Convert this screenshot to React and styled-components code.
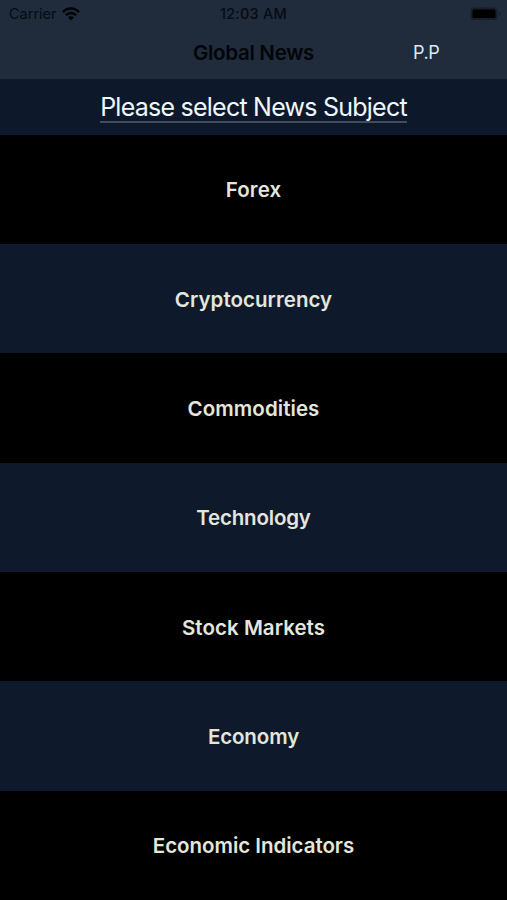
import React from 'react'

import styled, { createGlobalStyle } from 'styled-components'

const subjects = [
    { name: 'Forex', spacing: 0.1 },
    { name: 'Cryptocurrency', spacing: 0.05 },
    { name: 'Commodities', spacing: 0.06 },
    { name: 'Technology', spacing: -0.2 },
    { name: 'Stock Markets', spacing: 0.05 },
    { name: 'Economy', spacing: -0.12 },
    { name: 'Economic Indicators', spacing: -0.03 },
]

export default function App() {
    return (
        <Screen>
            <GlobalStyle />
            <Header>
                <StatusBar>
                    <Carrier>
                        Carrier
                        <WifiIcon />
                    </Carrier>
                    <Clock>12:03 AM</Clock>
                    <BatteryIcon />
                </StatusBar>
                <NavBar>
                    <NavTitle>Global News</NavTitle>
                    <NavButton>P.P</NavButton>
                </NavBar>
            </Header>
            <Prompt>
                <PromptText>Please select News Subject</PromptText>
            </Prompt>
            <List>
                {subjects.map((s, idx) => (
                    <Row key={s.name} $dark={idx % 2 === 0}>
                        <Label $spacing={s.spacing}>{s.name}</Label>
                    </Row>
                ))}
            </List>
        </Screen>
    )
}

const WifiIcon = () => (
    <svg width="18" height="14" viewBox="0 0 18 14" fill="none" stroke="#000204" strokeWidth="2.5">
        <path d="M1 5.1 C5.4 .4 12.6 .4 17 5.1" />
        <path d="M3.9 8.2 C6.8 5.3 11.2 5.3 14.1 8.2" />
        <path d="M9 13.4 L6 10.4 C7.6 8.9 10.4 8.9 12 10.4 Z" fill="#000204" stroke="none" />
    </svg>
)

const BatteryIcon = () => (
    <Battery width="32" height="14" viewBox="0 0 32 14">
        <rect x=".5" y=".5" width="27" height="12.5" rx="3.5" fill="#151e2b" />
        <rect x="2.5" y="2.5" width="23" height="8.5" rx="1.6" fill="#000" />
        <path d="M29 4.5 C31 5.3 31 8.2 29 9 Z" fill="#151e2b" />
    </Battery>
)

const GlobalStyle = createGlobalStyle`

    body {
        margin: 0;
        background: #000;
    }

`

const Screen = styled.div`

    display: flex;
    flex-direction: column;

    height: 900px;
    overflow: hidden;

    background: #000;

    font-family: "Inter", "Liberation Sans", sans-serif;

`

const Header = styled.header`

    flex: none;
    box-sizing: border-box;
    height: 79px;

    background: #202b3b;

`

const StatusBar = styled.div`

    display: grid;
    grid-template-columns: 1fr auto 1fr;
    align-items: center;

    height: 27px;
    padding: 0 5px 0 9px;

    color: #050b14;

`

const Carrier = styled.div`

    display: flex;
    align-items: center;
    gap: 5px;

    font-size: 14.5px;
    letter-spacing: 0;

`

const Clock = styled.div`

    margin-right: 4px;

    font-size: 14.5px;
    font-weight: 500;
    letter-spacing: 0.25px;

`

const Battery = styled.svg`

    justify-self: end;

`

const NavBar = styled.nav`

    display: grid;
    grid-template-columns: 1fr auto 1fr;
    align-items: center;

    height: 51px;

`

const NavTitle = styled.h1`

    grid-column: 2;
    margin: 0;

    font-size: 20.5px;
    font-weight: 600;
    letter-spacing: -0.3px;
    color: #02050a;

`

const NavButton = styled.button`

    justify-self: start;
    margin: 0 0 0 99px;
    padding: 0;

    background: none;
    border: none;

    font-family: inherit;
    font-size: 18px;
    letter-spacing: -0.4px;
    color: #dbe7f2;

    cursor: pointer;

`

const Prompt = styled.div`

    flex: none;
    display: flex;
    justify-content: center;

    height: 55.5px;

    background: #0e182b;

`

const PromptText = styled.h2`

    box-sizing: border-box;
    height: 44px;
    margin: 0;

    border-bottom: 2px solid #414c5c;

    font-size: 25px;
    font-weight: 400;
    line-height: 56px;
    letter-spacing: -0.76px;
    white-space: nowrap;
    color: #eef8ff;

`

const List = styled.div`

    flex: none;

`

const Row = styled.div`

    display: flex;
    justify-content: center;
    align-items: center;

    box-sizing: border-box;
    height: 109.35px;
    padding-top: 1px;

    background: ${props => props.$dark ? '#000' : '#0e192b'};

`

const Label = styled.span`

    font-size: 20.5px;
    font-weight: 600;
    letter-spacing: ${props => props.$spacing}px;
    color: #e4e6dd;

`
